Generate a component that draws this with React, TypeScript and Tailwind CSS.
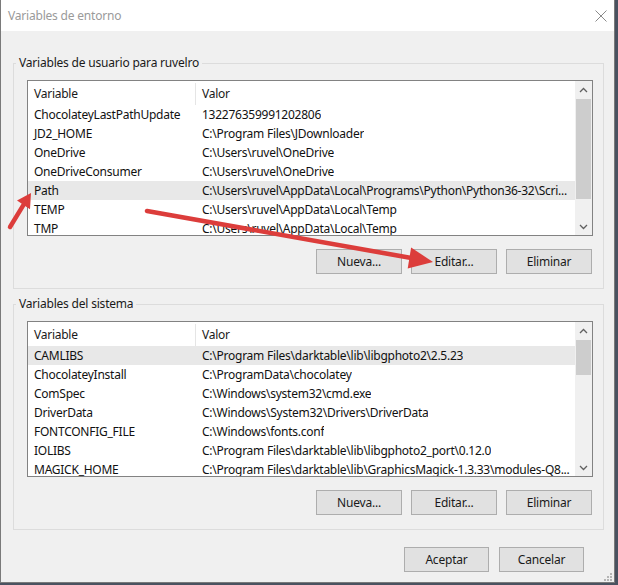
import React from "react";

type Row = [string, string];

const userVars: Row[] = [
  ["ChocolateyLastPathUpdate", "132276359991202806"],
  ["JD2_HOME", "C:\\Program Files\\JDownloader"],
  ["OneDrive", "C:\\Users\\ruvel\\OneDrive"],
  ["OneDriveConsumer", "C:\\Users\\ruvel\\OneDrive"],
  ["Path", "C:\\Users\\ruvel\\AppData\\Local\\Programs\\Python\\Python36-32\\Scri..."],
  ["TEMP", "C:\\Users\\ruvel\\AppData\\Local\\Temp"],
  ["TMP", "C:\\Users\\ruvel\\AppData\\Local\\Temp"],
];

const systemVars: Row[] = [
  ["CAMLIBS", "C:\\Program Files\\darktable\\lib\\libgphoto2\\2.5.23"],
  ["ChocolateyInstall", "C:\\ProgramData\\chocolatey"],
  ["ComSpec", "C:\\Windows\\system32\\cmd.exe"],
  ["DriverData", "C:\\Windows\\System32\\Drivers\\DriverData"],
  ["FONTCONFIG_FILE", "C:\\Windows\\fonts.conf"],
  ["IOLIBS", "C:\\Program Files\\darktable\\lib\\libgphoto2_port\\0.12.0"],
  ["MAGICK_HOME", "C:\\Program Files\\darktable\\lib\\GraphicsMagick-1.3.33\\modules-Q8..."],
];

const Chevron = ({ up }: { up?: boolean }) => (
  <svg width="9" height="6" viewBox="0 0 9 6" className="text-[#606060]">
    <path
      d={up ? "M1 5 L4.5 1.5 L8 5" : "M1 1 L4.5 4.5 L8 1"}
      fill="none"
      stroke="currentColor"
      strokeWidth="1.3"
    />
  </svg>
);

const Button = ({ label, wide }: { label: string; wide?: boolean }) => (
  <button
    className={
      (wide ? "w-[86px] " : "w-[85px] ") +
      "h-[25px] bg-[#e1e1e1] border border-[#adadad] text-[12px] tracking-[-0.2px] text-[#1a1a1a] leading-none"
    }
  >
    {label}
  </button>
);

const VarList = ({
  rows,
  selected,
  thumb,
}: {
  rows: Row[];
  selected: number;
  thumb: string;
}) => (
  <div className="w-[566px] h-[156px] border border-[#828282] bg-white flex overflow-hidden">
    <div className="flex-1 min-w-0 flex flex-col overflow-hidden text-[12px] tracking-[-0.25px]">
      <div className="h-[24px] shrink-0 flex items-center pt-[2px] text-[#1a1a1a]">
        <div className="w-[168px] shrink-0 h-full pl-[6px] flex items-center border-r border-[#e5e5e5]">Variable</div>
        <div className="pl-[6px]">Valor</div>
      </div>
      {rows.map(([name, value], i) => (
        <div
          key={name}
          className={
            "h-[19px] shrink-0 flex items-center text-[#111] whitespace-nowrap " +
            (i === selected ? "bg-[#e8e8e8]" : "")
          }
        >
          <div className="w-[168px] shrink-0 pl-[6px]">{name}</div>
          <div className="pl-[6px] min-w-0 overflow-hidden">{value}</div>
        </div>
      ))}
    </div>
    <div className="w-[17px] shrink-0 bg-[#f0f0f0] flex flex-col">
      <div className="h-[17px] flex items-center justify-center">
        <Chevron up />
      </div>
      <div className="flex-1 px-[1px]">
        <div className={"bg-[#cdcdcd] " + thumb}></div>
      </div>
      <div className="h-[17px] flex items-center justify-center">
        <Chevron />
      </div>
    </div>
  </div>
);

const Group = ({ title, children }: { title: string; children: React.ReactNode }) => (
  <fieldset className="w-[591px] border border-[#dcdcdc] p-0 m-0 min-w-0">
    <legend className="ml-[2px] px-[3px] text-[12px] leading-[16px] tracking-[-0.2px] text-[#1a1a1a]">{title}</legend>
    <div className="pl-[13px] pr-[10px] pt-[9px] pb-[14px] flex flex-col">{children}</div>
  </fieldset>
);

const ButtonRow = () => (
  <div className="mt-[13px] flex justify-end gap-[9px] pr-[1px]">
    <Button label="Nueva..." wide />
    <Button label="Editar..." wide />
    <Button label="Eliminar" wide />
  </div>
);

export default function App() {
  return (
    <div className="relative w-[618px] h-[585px] bg-[#4a5260] overflow-hidden font-['Noto_Sans',sans-serif]">
      <div className="w-[615px] h-[583px] bg-[#f0f0f0] border-x border-b border-[#7a7a7a] flex flex-col">
        {/* Title bar */}
        <div className="h-[31px] shrink-0 bg-white flex items-center justify-between pl-[7px] pr-[7px]">
          <span className="text-[12px] tracking-[-0.2px] text-[#9a9a9a]">Variables de entorno</span>
          <svg width="12" height="12" viewBox="0 0 12 12">
            <path d="M0.5 0.5 L11.5 11.5 M11.5 0.5 L0.5 11.5" stroke="#8a8a8a" strokeWidth="1" />
          </svg>
        </div>

        <div className="pl-[12px] pr-[10px] pt-[24px] flex flex-col">
          <Group title="Variables de usuario para ruvelro">
            <VarList rows={userVars} selected={4} thumb="mt-[1px] h-[100px]" />
            <ButtonRow />
          </Group>

          <div className="mt-[7px]">
            <Group title="Variables del sistema">
              <VarList rows={systemVars} selected={0} thumb="mt-[1px] h-[35px]" />
              <ButtonRow />
            </Group>
          </div>

          <div className="mt-[17px] mr-[20px] flex justify-end gap-[10px]">
            <Button label="Aceptar" />
            <Button label="Cancelar" />
          </div>
        </div>
      </div>

      {/* resize grip */}
      <svg className="absolute left-[604px] top-[573px]" width="9" height="9" viewBox="0 0 9 9">
        <rect x="6" y="0" width="2" height="2" fill="#b5b5b5" />
        <rect x="3" y="3" width="2" height="2" fill="#b5b5b5" />
        <rect x="6" y="3" width="2" height="2" fill="#b5b5b5" />
        <rect x="0" y="6" width="2" height="2" fill="#b5b5b5" />
        <rect x="3" y="6" width="2" height="2" fill="#b5b5b5" />
        <rect x="6" y="6" width="2" height="2" fill="#b5b5b5" />
      </svg>

      {/* red annotation arrows */}
      <svg className="absolute inset-0 pointer-events-none" width="618" height="585" viewBox="0 0 618 585">
        <line x1="147" y1="211" x2="410" y2="257.8" stroke="#dc3d3b" strokeWidth="4.5" strokeLinecap="round" />
        <polygon points="433,262 407.7,268.5 411.1,247.5" fill="#dc3d3b" />
        <line x1="10" y1="227" x2="23.5" y2="204.8" stroke="#dc3d3b" strokeWidth="4.5" strokeLinecap="round" />
        <polygon points="31,193 30,209.2 17,200.6" fill="#dc3d3b" />
      </svg>
    </div>
  );
}
